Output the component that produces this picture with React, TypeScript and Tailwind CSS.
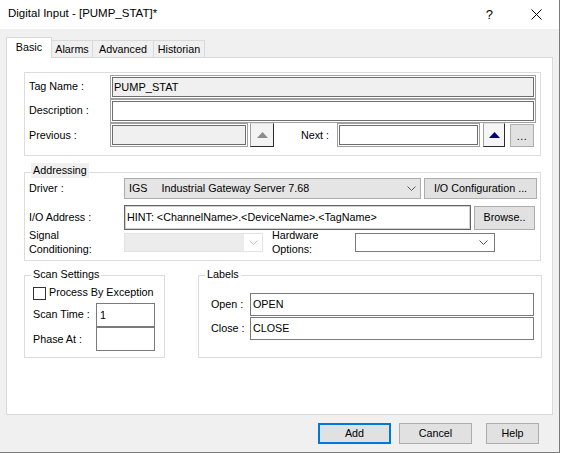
import React from 'react'

const sunken = 'border border-[#a0a0a0] shadow-[inset_0_0_0_1px_#ffffff,inset_0_0_0_2px_#6e6e6e]'
const winBtn = 'flex items-center justify-center bg-[#e1e1e1] border border-[#adadad]'

function Chevron({ color = '#5a5a5a' }: { color?: string }) {
  return (
    <svg width="9" height="5" viewBox="0 0 9 5" className="shrink-0">
      <path d="M0.5 0.5 L4.5 4.5 L8.5 0.5" fill="none" stroke={color} strokeWidth="1" />
    </svg>
  )
}

function UpArrow({ color }: { color: string }) {
  return (
    <svg width="11" height="6" viewBox="0 0 11 6">
      <path d="M5.5 0 L11 6 L0 6 Z" fill={color} />
    </svg>
  )
}

function Tab({ label, active, w }: { label: string; active?: boolean; w: string }) {
  return active ? (
    <div className={`${w} h-[21px] -mb-px relative z-10 bg-white border-x border-t border-[#d9d9d9] flex items-center justify-center pb-[2px]`}>
      {label}
    </div>
  ) : (
    <div className={`${w} h-[17px] -ml-px bg-[#f0f0f0] border-x border-t border-[#d9d9d9] flex items-center justify-center`}>
      {label}
    </div>
  )
}

export default function App() {
  return (
    <div className="font-['Liberation_Sans',Arial,sans-serif] text-[10.75px] text-black w-[560px] h-[453px] bg-[#f0f0f0] border-r border-b border-[#7b7b7b] flex flex-col">
      {/* title bar */}
      <div className="h-[29px] shrink-0 bg-white flex items-center pl-[8px] pr-[17px] pb-[1px]">
        <span className="text-[11.5px]">Digital Input - [PUMP_STAT]*</span>
        <span className="ml-auto text-[13px] leading-none">?</span>
        <svg className="ml-[38px]" width="11" height="11" viewBox="0 0 11 11">
          <path d="M0.5 0.5 L10.5 10.5 M10.5 0.5 L0.5 10.5" stroke="#000" strokeWidth="1" />
        </svg>
      </div>

      {/* tabs */}
      <div className="mt-[8px] ml-[6px] h-[20px] flex items-end">
        <Tab label="Basic" active w="w-[46px]" />
        <Tab label="Alarms" w="w-[42px]" />
        <Tab label="Advanced" w="w-[62px]" />
        <Tab label="Historian" w="w-[52px]" />
      </div>

      {/* tab page */}
      <div className="ml-[6px] w-[547px] h-[358px] shrink-0 bg-white border border-[#d9d9d9] pl-[17px] pt-[14px]">
        {/* tag group */}
        <div className="w-[517px] h-[84px] border border-[#dcdcdc] pt-[2px]">
          <div className="flex items-center h-[24px]">
            <div className="w-[85px] pl-[4px] pb-[2px]">Tag Name :</div>
            <div className={`w-[426px] h-[24px] ${sunken} bg-[#f0f0f0] flex items-center px-[3px] text-[11px]`}>PUMP_STAT</div>
          </div>
          <div className="flex items-center h-[24px]">
            <div className="w-[85px] pl-[4px] pb-[1px]">Description :</div>
            <div className={`w-[426px] h-[24px] ${sunken} bg-white`} />
          </div>
          <div className="flex items-center h-[24px]">
            <div className="w-[85px] pl-[4px]">Previous :</div>
            <div className={`w-[138px] h-[24px] ${sunken} bg-[#f0f0f0]`} />
            <div className="ml-[2px] w-[24px] h-[24px] bg-[#f3f3f3] border border-t-[#e0e0e0] border-l-[#a0a0a0] border-r-[#2b2b2b] border-b-[#2b2b2b] flex items-center justify-center">
              <UpArrow color="#8c8c8c" />
            </div>
            <div className="w-[63px] text-right pr-[8px]">Next :</div>
            <div className={`w-[143px] h-[24px] ${sunken} bg-white`} />
            <div className="ml-[3px] w-[22px] h-[24px] bg-[#f6f6f6] border border-t-[#e0e0e0] border-l-[#a0a0a0] border-r-[#2b2b2b] border-b-[#2b2b2b] flex items-center justify-center">
              <UpArrow color="#000080" />
            </div>
            <div className={`ml-[5px] w-[24px] h-[23px] ${winBtn} pt-[2px] tracking-[0.5px]`}>...</div>
          </div>
        </div>

        {/* addressing group */}
        <div className="relative mt-[16px] w-[517px] h-[89px] border border-[#dcdcdc] pt-[5px]">
          <span className="absolute left-[6px] -top-[10px] h-[15px] leading-[15px] px-[2px] bg-[#f0f0f0]">Addressing</span>
          <div className="flex items-center h-[21px]">
            <div className="w-[99px] pl-[4px]">Driver :</div>
            <div className="w-[297px] h-[21px] bg-[#e5e5e5] border border-[#acacac] flex items-center pl-[4px] pr-[4px]">
              <span className="mr-[14px]">IGS</span>
              <span>Industrial Gateway Server 7.68</span>
              <span className="ml-auto"><Chevron /></span>
            </div>
            <div className={`ml-[3px] w-[113px] h-[21px] ${winBtn}`}>I/O Configuration ...</div>
          </div>
          <div className="flex items-center h-[25px] mt-[6px]">
            <div className="w-[99px] pl-[4px]">I/O Address :</div>
            <div className="w-[347px] h-[25px] border border-[#646464] shadow-[inset_0_0_0_1px_#d0d0d0] bg-white flex items-center px-[2px]">
              HINT: &lt;ChannelName&gt;.&lt;DeviceName&gt;.&lt;TagName&gt;
            </div>
            <div className={`ml-[3px] w-[61px] h-[24px] ${winBtn}`}>Browse..</div>
          </div>
          <div className="flex items-center -mt-[2px]">
            <div className="w-[99px] pl-[4px] leading-[14px]">
              Signal
              <br />
              Conditioning:
            </div>
            <div className="w-[139px] h-[19px] border border-[#e3e3e3] bg-white flex">
              <div className="flex-1 bg-[#ececec]" />
              <div className="w-[18px] flex items-center justify-center">
                <Chevron color="#c4c4c4" />
              </div>
            </div>
            <div className="ml-[9px] w-[83px] leading-[14px]">
              Hardware
              <br />
              Options:
            </div>
            <div className="w-[140px] h-[19px] border border-[#7a7a7a] bg-white flex items-center justify-end pr-[6px]">
              <Chevron />
            </div>
          </div>
        </div>

        {/* scan settings + labels */}
        <div className="mt-[14px] flex">
          <div className="relative w-[141px] h-[83px] border border-[#dcdcdc] pl-[8px] pt-[11px]">
            <span className="absolute left-[6px] -top-[9px] leading-[15px] px-[2px] bg-white">Scan Settings</span>
            <div className="flex items-center h-[13px]">
              <div className="w-[13px] h-[13px] border border-[#333333] bg-white" />
              <span className="ml-[3px] -mt-[2px]">Process By Exception</span>
            </div>
            <div className="flex items-center mt-[3px]">
              <div className="w-[63px] pb-[2px]">Scan Time :</div>
              <div className="w-[59px] h-[24px] border border-[#7a7a7a] bg-white flex items-center px-[3px]">1</div>
            </div>
            <div className="flex items-center">
              <div className="w-[63px]">Phase At :</div>
              <div className="w-[59px] h-[24px] border border-[#7a7a7a] bg-white" />
            </div>
          </div>

          <div className="relative ml-[33px] w-[344px] h-[83px] border border-[#dcdcdc] pl-[12px] pt-[17px]">
            <span className="absolute left-[6px] -top-[9px] leading-[15px] px-[2px] bg-white">Labels</span>
            <div className="flex items-center">
              <div className="w-[39px]">Open :</div>
              <div className="w-[284px] h-[23px] border border-[#7a7a7a] bg-white flex items-center px-[2px]">OPEN</div>
            </div>
            <div className="flex items-center mt-[1px]">
              <div className="w-[39px]">Close :</div>
              <div className="w-[284px] h-[23px] border border-[#7a7a7a] bg-white flex items-center px-[2px]">CLOSE</div>
            </div>
          </div>
        </div>
      </div>

      {/* dialog buttons */}
      <div className="mt-[8px] flex justify-end pr-[20px]">
        <div className="w-[73px] h-[21px] flex items-center justify-center bg-[#e1e1e1] border-2 border-[#0078d7]">Add</div>
        <div className={`ml-[8px] w-[73px] h-[21px] ${winBtn}`}>Cancel</div>
        <div className={`ml-[14px] w-[53px] h-[21px] ${winBtn}`}>Help</div>
      </div>
    </div>
  )
}
